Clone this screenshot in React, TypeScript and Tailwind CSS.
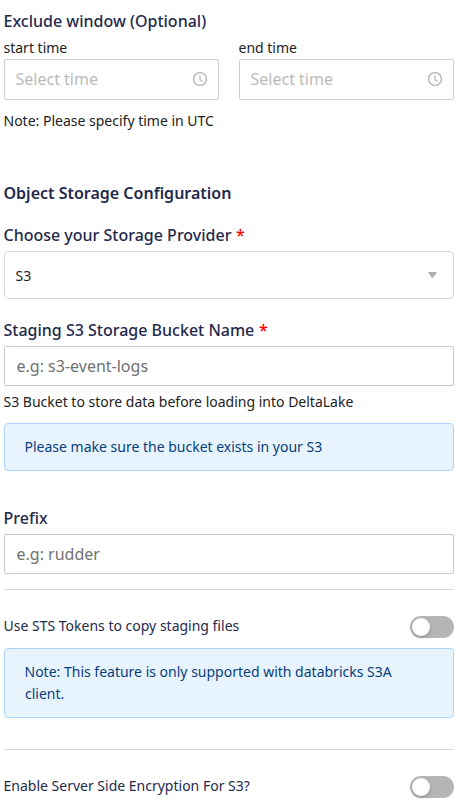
import React from 'react';

function Clock() {
  return (
    <svg viewBox="64 64 896 896" className="mb-[1px] h-[14px] w-[14px] shrink-0" fill="#b5b5b5" stroke="#b5b5b5" strokeWidth="14">
      <path d="M512 64C264.6 64 64 264.6 64 512s200.6 448 448 448 448-200.6 448-448S759.4 64 512 64zm0 820c-205.4 0-372-166.6-372-372s166.6-372 372-372 372 166.6 372 372-166.6 372-372 372z" />
      <path d="M686.7 638.6L544.1 535.5V288c0-4.400-3.600-8-8-8H488c-4.400 0-8 3.600-8 8v275.400c0 2.600 1.200 5 3.300 6.500l165.400 120.600c3.600 2.600 8.600 1.800 11.200-1.700l28.600-39c2.600-3.700 1.800-8.700-1.800-11.200z" />
    </svg>
  );
}

function TimeField({ label }: { label: string }) {
  return (
    <div className="w-[215px]">
      <div className="h-[22px] text-sm leading-[22px] text-[#222]">{label}</div>
      <div className="flex h-[41px] items-center justify-between rounded-[2px] border border-[#d0d0d0] pl-[11px] pr-[11px]">
        <span className="pb-[2px] text-base leading-6 text-[#bababa]">Select time</span>
        <Clock />
      </div>
    </div>
  );
}

function Heading({ children, required = false }: { children: string; required?: boolean }) {
  return (
    <div className="h-6 whitespace-nowrap text-base font-medium leading-6 text-[#1f2a4d]">
      {children}
      {required && <span className="ml-[0.5px] text-[#f00]"> *</span>}
    </div>
  );
}

function Toggle() {
  return (
    <div className="flex h-[22px] w-11 shrink-0 items-center rounded-full bg-[#b5b5b5] pl-[2px]">
      <div className="h-[18px] w-[18px] rounded-full bg-white shadow-[0_2px_4px_rgba(0,35,11,0.2)]" />
    </div>
  );
}

export default function App() {
  return (
    <main className="h-[808px] w-[462px] overflow-hidden bg-white pl-1 pr-2 pt-[9px] font-['Noto_Sans',sans-serif] text-sm text-[#222] -indent-[0.5px]">
      <Heading>Exclude window (Optional)</Heading>
      <div className="mt-[4px] flex justify-between">
        <TimeField label="start time" />
        <TimeField label="end time" />
      </div>
      <div className="mt-[10px] leading-[22px]">Note: Please specify time in UTC</div>
      <h2 className="mt-[49px] h-6 text-base font-semibold leading-6 text-[#1f2a4d]">Object Storage Configuration</h2>
      <div className="mt-[18px]"><Heading required>Choose your Storage Provider</Heading></div>
      <div className="mt-1 flex h-12 items-center justify-between rounded-[4px] border border-[#d9d9d9] pl-[11px] pr-4">
        <span className="pt-[2px]">S3</span>
        <svg viewBox="0 0 9 6" className="h-[6px] w-[9px]" fill="#b0b0b0"><path d="M0 0h9L5.500 5.500h-2z" /></svg>
      </div>
      <div className="mt-[19px]"><Heading required>Staging S3 Storage Bucket Name</Heading></div>
      <div className="mt-1 flex h-10 items-center rounded-[2px] border border-[#c4cad1] pl-3 text-base text-[#717171]">e.g: s3-event-logs</div>
      <div className="mt-[5px] leading-[22px]">S3 Bucket to store data before loading into DeltaLake</div>
      <div className="mt-[10px] h-12 rounded-[4px] border border-[#acd5fb] bg-[#e7f4fe] px-5 py-3 leading-[22px] text-[#083e7c]">Please make sure the bucket exists in your S3</div>
      <div className="mt-[35px]"><Heading>Prefix</Heading></div>
      <div className="mt-1 flex h-10 items-center rounded-[2px] border border-[#c4cad1] pl-3 text-base text-[#717171]">e.g: rudder</div>
      <hr className="mt-[15px] border-[#d9d9d9]" />
      <div className="mt-[26px] flex h-[22px] items-center justify-between text-[#1f2a4d]">
        <span className="pb-[2px] leading-[22px]">Use STS Tokens to copy staging files</span><Toggle />
      </div>
      <div className="mt-[10px] h-[70px] rounded-[4px] border border-[#acd5fb] bg-[#e7f4fe] px-5 py-3 leading-[22px] text-[#083e7c]">Note: This feature is only supported with databricks S3A client.</div>
      <hr className="mt-[31px] border-[#d9d9d9]" />
      <div className="mt-[26px] flex h-[22px] items-center justify-between text-[#1f2a4d]">
        <span className="pb-[2px] leading-[22px]">Enable Server Side Encryption For S3?</span><Toggle />
      </div>
    </main>
  );
}
